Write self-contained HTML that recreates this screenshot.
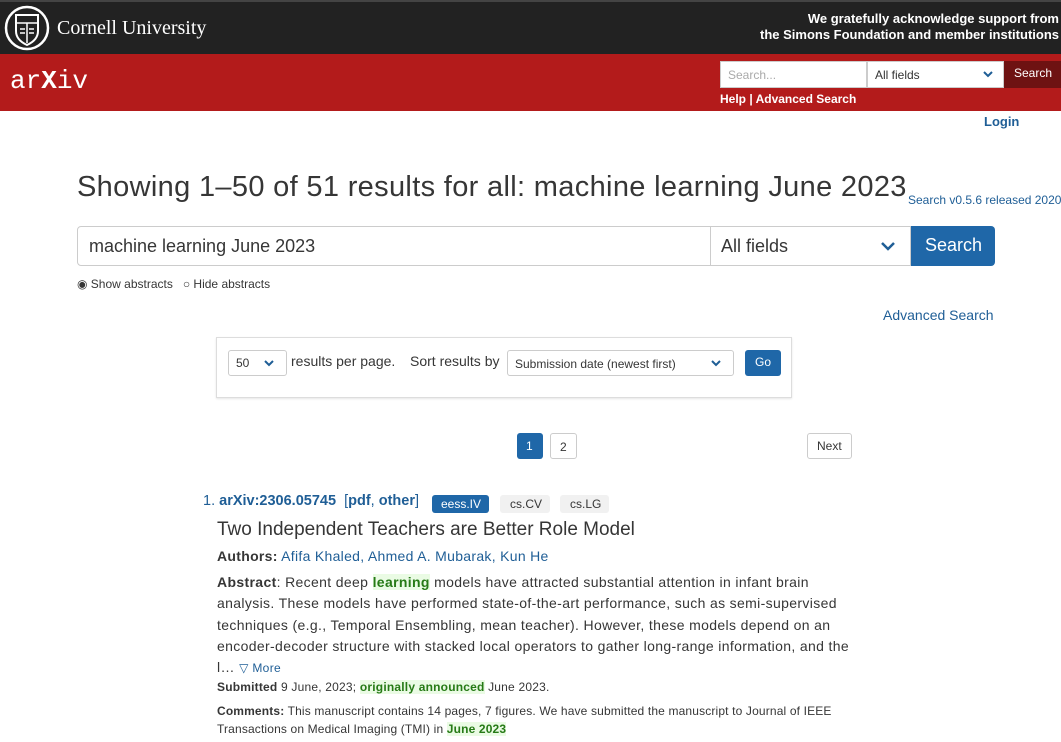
<!DOCTYPE html>
<html><head><meta charset="utf-8"><style>
*{margin:0;padding:0;box-sizing:border-box}
body{width:1061px;height:742px;overflow:hidden;background:#fff;font-family:"Liberation Sans",sans-serif;position:relative;color:#363636}
.a{position:absolute;white-space:nowrap}
a{color:#1f5e96;text-decoration:none}
.blue{color:#1f5e96}
.btn{background:#1f67a8;color:#fff}
.hl{background:#eafbe4;color:#267a16;font-weight:bold}
</style></head><body>
<div class="a" style="left:0;top:0;width:1061px;height:54px;background:#222;border-top:2px solid #444"></div>
<svg class="a" style="left:4px;top:5px" width="46" height="46" viewBox="0 0 46 46"><circle cx="23" cy="23" r="21" fill="none" stroke="#fff" stroke-width="2.5"/><path d="M12 10h22v16q0 9-11 14q-11-5-11-14z" fill="none" stroke="#fff" stroke-width="2"/><path d="M12 18h22M23 18v20M16 24h5M16 28h5M25 24h5M25 28h5" stroke="#fff" stroke-width="1.5"/></svg>
<div class="a" style="left:57px;top:17px;font-family:'Liberation Serif',serif;font-size:20px;color:#fff">Cornell University</div>
<div class="a" style="right:2px;top:11px;color:#fff;font-size:13px;font-weight:bold;text-align:right;line-height:16px">We gratefully acknowledge support from<br>the Simons Foundation and member institutions</div>
<div class="a" style="left:0;top:54px;width:1061px;height:57px;background:#b31b1b"></div>
<div class="a" style="left:10px;top:66px;color:#fff;font-family:'Liberation Mono',monospace;font-size:26px;letter-spacing:0px">ar<span style="font-weight:bold">X</span>iv</div>
<div class="a" style="left:720px;top:61px;width:147px;height:27px;background:#fff;border:1px solid #ccc;font-size:12px;color:#aaa;padding:6px 7px">Search...</div>
<div class="a" style="left:867px;top:61px;width:137px;height:27px;background:#fff;border:1px solid #ccc;font-size:12px;color:#333;padding:6px 7px">All fields<svg style="position:absolute;right:10px;top:9px" width="10" height="7"><path d="M1 1l4 4 4-4" fill="none" stroke="#1f5e96" stroke-width="2"/></svg></div>
<div class="a" style="left:1004px;top:61px;width:57px;height:27px;background:#6e1212;color:#fff;font-size:12px;padding:5px 10px">Search</div>
<div class="a" style="left:720px;top:92px;color:#fff;font-size:12px;font-weight:bold">Help | Advanced Search</div>
<div class="a" style="left:984px;top:114px;font-size:13px;font-weight:bold;color:#1f5e96">Login</div>
<div class="a" style="left:77px;top:171px;font-size:29px;letter-spacing:0.33px;color:#363636">Showing 1–50 of 51 results for all: machine learning June 2023</div>
<div class="a" style="left:908px;top:193px;font-size:12px;color:#1f5e96">Search v0.5.6 released 2020</div>
<div class="a" style="left:77px;top:226px;width:634px;height:40px;border:1px solid #ccc;border-radius:4px 0 0 4px;font-size:18px;padding:9px 11px">machine learning June 2023</div>
<div class="a" style="left:710px;top:226px;width:201px;height:40px;border:1px solid #ccc;font-size:18px;padding:9px 10px">All fields<svg style="position:absolute;right:14px;top:14px" width="16" height="10"><path d="M2 2l6 6 6-6" fill="none" stroke="#1f5e96" stroke-width="2.5"/></svg></div>
<div class="a btn" style="left:911px;top:226px;width:84px;height:40px;font-size:18px;padding:9px 14px;border-radius:0 4px 4px 0">Search</div>
<div class="a" style="left:77px;top:277px;font-size:12px">◉ Show abstracts &nbsp; ○ Hide abstracts</div>
<div class="a" style="left:883px;top:307px;font-size:14px;color:#1f5e96">Advanced Search</div>
<div class="a" style="left:216px;top:337px;width:576px;height:61px;border:1px solid #ddd;box-shadow:0 1px 2px rgba(0,0,0,.1)"></div>
<div class="a" style="left:228px;top:350px;width:59px;height:26px;border:1px solid #ccc;border-radius:3px;font-size:12px;padding:5px 7px">50<svg style="position:absolute;right:12px;top:9px" width="10" height="7"><path d="M1 1l4 4 4-4" fill="none" stroke="#1f5e96" stroke-width="2"/></svg></div>
<div class="a" style="left:291px;top:353px;font-size:14px">results per page.</div>
<div class="a" style="left:410px;top:353px;font-size:14px">Sort results by</div>
<div class="a" style="left:507px;top:350px;width:227px;height:26px;border:1px solid #ccc;border-radius:3px;font-size:12px;padding:6px 7px">Submission date (newest first)<svg style="position:absolute;right:12px;top:9px" width="10" height="7"><path d="M1 1l4 4 4-4" fill="none" stroke="#1f5e96" stroke-width="2"/></svg></div>
<div class="a btn" style="left:745px;top:350px;width:36px;height:26px;border-radius:3px;font-size:12px;padding:5px 10px">Go</div>
<div class="a btn" style="left:517px;top:433px;width:26px;height:26px;border-radius:3px;font-size:12px;padding:6px 9px">1</div>
<div class="a" style="left:550px;top:433px;width:27px;height:26px;border:1px solid #ccc;border-radius:3px;font-size:12px;padding:6px 9px">2</div>
<div class="a" style="left:807px;top:433px;width:45px;height:26px;border:1px solid #ccc;border-radius:3px;font-size:12px;padding:5px 9px">Next</div>
<div class="a" style="left:203px;top:493px;font-size:14.5px;color:#1f5e96">1. <b>arXiv:2306.05745</b> &nbsp;[<b>pdf</b>, <b>other</b>]</div>
<div class="a btn" style="left:432px;top:495px;width:57px;height:18px;border-radius:3px;font-size:12px;padding:2px 9px">eess.IV</div>
<div class="a" style="left:500px;top:495px;width:50px;height:18px;border-radius:3px;background:#f1f1f1;font-size:12px;padding:2px 10px">cs.CV</div>
<div class="a" style="left:560px;top:495px;width:49px;height:18px;border-radius:3px;background:#f1f1f1;font-size:12px;padding:2px 10px">cs.LG</div>
<div class="a" style="left:217px;top:519px;font-size:19px;color:#363636">Two Independent Teachers are Better Role Model</div>
<div class="a" style="left:217px;top:548px;font-size:14px;letter-spacing:0.3px"><b>Authors:</b> <span class="blue">Afifa Khaled, Ahmed A. Mubarak, Kun He</span></div>
<div class="a" style="left:217px;top:572px;font-size:14px;line-height:21.3px;letter-spacing:0.35px"><b>Abstract</b>: Recent deep <span class="hl">learning</span> models have attracted substantial attention in infant brain<br>analysis. These models have performed state-of-the-art performance, such as semi-supervised<br>techniques (e.g., Temporal Ensembling, mean teacher). However, these models depend on an<br>encoder-decoder structure with stacked local operators to gather long-range information, and the<br>l… <span class="blue" style="font-size:12px">▽ More</span></div>
<div class="a" style="left:217px;top:680px;font-size:12px;letter-spacing:0.2px"><b>Submitted</b> 9 June, 2023; <span class="hl">originally announced</span> June 2023.</div>
<div class="a" style="left:217px;top:702px;font-size:12px;line-height:18px;letter-spacing:0.15px"><b>Comments:</b> This manuscript contains 14 pages, 7 figures. We have submitted the manuscript to Journal of IEEE<br>Transactions on Medical Imaging (TMI) in <span class="hl">June 2023</span></div>
</body></html>
